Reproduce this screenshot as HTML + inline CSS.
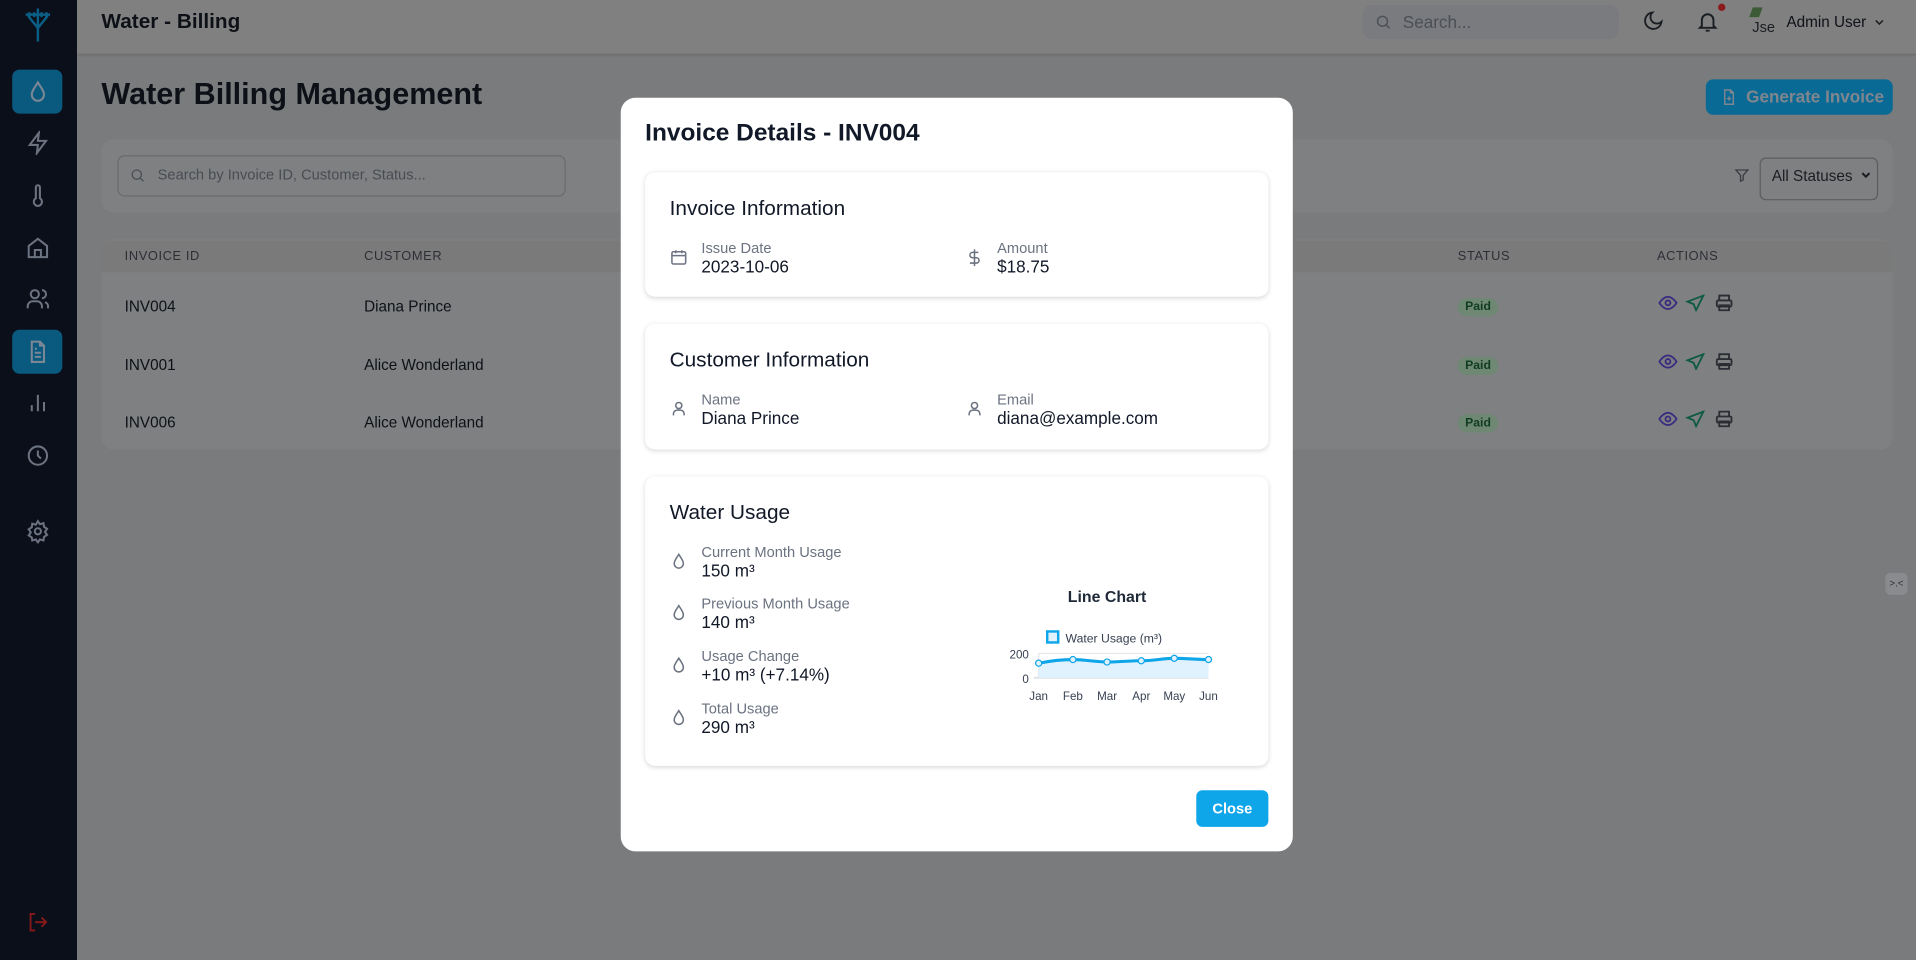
<!DOCTYPE html>
<html><head><meta charset="utf-8"><style>
html,body{margin:0;padding:0;width:1916px;height:960px;overflow:hidden;background:#7a7b7d}
#s{position:absolute;left:0;top:0;width:1568px;height:786px;transform:scale(1.22194,1.2214);transform-origin:0 0;font-family:"Liberation Sans",sans-serif;color:#0d1117}
.a{position:absolute}
svg{display:block}
.si{position:absolute;left:10px;width:41px;height:36px;display:flex;align-items:center;justify-content:center}
.card{position:absolute;background:#7f8081;border-radius:10px}
.th{font-size:10.5px;color:#2c2f35;letter-spacing:.5px}
.td{font-size:12.5px;color:#0d1117}
.paid{position:absolute;background:#6e8873;color:#103c20;font-size:10px;font-weight:bold;padding:2px 6px;border-radius:8px}
.mc{position:absolute;left:20px;width:510px;background:#fff;border-radius:8px;box-shadow:0 1px 4px rgba(0,0,0,.15)}
.ct{position:absolute;left:20px;font-size:17px;color:#111827}
.lb{position:absolute;font-size:12px;color:#6b7280}
.vl{position:absolute;font-size:14px;color:#111827}
</style></head><body><div id="s">
<div class="a" style="left:0;top:0;width:63px;height:786px;background:#0a0f1a"></div>
<svg class="a" style="left:19px;top:4px" width="24" height="30" viewBox="0 0 24 30" fill="none" stroke="#0b5f86" stroke-width="2"><path d="M2 8h20M12 3v29M5 6v4M9 6v4M15 6v4M19 6v4M4 9l8 10 8-10"/></svg>
<div class="si" style="top:57px;background:#0a5a80;border-radius:6px"><svg width="20" height="20" viewBox="0 0 24 24" fill="none" stroke="#7c8795" stroke-width="2"><path d="M12 3C9 8 6 11 6 15a6 6 0 0012 0c0-4-3-7-6-12z"/></svg></div>
<div class="si" style="top:99px"><svg width="20" height="20" viewBox="0 0 24 24" fill="none" stroke="#6b7280" stroke-width="2"><path d="M13 2L4 14h8l-1 8 9-12h-8z"/></svg></div>
<div class="si" style="top:142px"><svg width="20" height="22" viewBox="0 0 24 24" fill="none" stroke="#6b7280" stroke-width="2"><path d="M14 14.8V4a2 2 0 00-4 0v10.8a4 4 0 104 0z"/></svg></div>
<div class="si" style="top:185px"><svg width="20" height="20" viewBox="0 0 24 24" fill="none" stroke="#6b7280" stroke-width="2"><path d="M3 10l9-7 9 7v11H3zM9 21v-7h6v7"/></svg></div>
<div class="si" style="top:227px"><svg width="20" height="20" viewBox="0 0 24 24" fill="none" stroke="#6b7280" stroke-width="2"><circle cx="9" cy="7" r="4"/><path d="M2 21v-2a5 5 0 015-5h4a5 5 0 015 5v2M16 3a4 4 0 010 8M22 21v-2a4 4 0 00-3-4"/></svg></div>
<div class="si" style="top:270px;background:#0a5a80;border-radius:6px"><svg width="20" height="20" viewBox="0 0 24 24" fill="none" stroke="#7c8795" stroke-width="2"><path d="M14 2H6v20h12V6zM14 2v4h4M9 13h6M9 17h6M9 9h2"/></svg></div>
<div class="si" style="top:312px"><svg width="20" height="20" viewBox="0 0 24 24" fill="none" stroke="#6b7280" stroke-width="2"><path d="M6 20v-6M12 20V4M18 20v-9"/></svg></div>
<div class="si" style="top:355px"><svg width="20" height="20" viewBox="0 0 24 24" fill="none" stroke="#6b7280" stroke-width="2"><circle cx="12" cy="12" r="9"/><path d="M12 7v5l3 3"/></svg></div>
<div class="si" style="top:417px"><svg width="20" height="20" viewBox="0 0 24 24" fill="none" stroke="#6b7280" stroke-width="2"><circle cx="12" cy="12" r="3"/><path d="M12 2l2 3 3.5-1 .5 3.5 3 2-2 3 2 3-3 2-.5 3.5-3.5-1-2 3-2-3-3.5 1L6 18l-3-2 2-3-2-3 3-2 .5-3.5 3.5 1z"/></svg></div>
<div class="si" style="top:737px"><svg width="18" height="18" viewBox="0 0 24 24" fill="none" stroke="#8a1a1a" stroke-width="2"><path d="M9 21H4V3h5M16 17l5-5-5-5M21 12H9"/></svg></div>
<div class="a" style="left:63px;top:0;width:1505px;height:44px;background:#808080;box-shadow:0 1px 2px rgba(0,0,0,.15)"></div>
<div class="a" style="left:83px;top:8px;font-size:17px;font-weight:bold;color:#0d1117">Water - Billing</div>
<div class="a" style="left:1115px;top:4px;width:210px;height:28px;background:#7a7b7e;border-radius:8px"></div>
<svg class="a" style="left:1125px;top:11px" width="14" height="14" viewBox="0 0 24 24" fill="none" stroke="#4b4f56" stroke-width="2"><circle cx="11" cy="11" r="7"/><path d="M21 21l-5-5"/></svg>
<div class="a" style="left:1148px;top:10px;font-size:14px;color:#4b4f56">Search...</div>
<svg class="a" style="left:1344px;top:8px" width="18" height="18" viewBox="0 0 24 24" fill="none" stroke="#1a1d22" stroke-width="2"><path d="M21 13A9 9 0 1111 3a7 7 0 0010 10z"/></svg>
<svg class="a" style="left:1388px;top:8px" width="19" height="20" viewBox="0 0 24 24" fill="none" stroke="#1a1d22" stroke-width="2"><path d="M6 16V10a6 6 0 0112 0v6l2 2H4zM10 21h4"/></svg>
<div class="a" style="left:1406px;top:3px;width:6px;height:6px;border-radius:50%;background:#8b1a1a"></div>
<div class="a" style="left:1434px;top:15px;font-size:12px;color:#1a1d22">Jse</div>
<div class="a" style="left:1433px;top:6px;width:8px;height:8px;background:#3c5a36;transform:skewX(-20deg)"></div>
<div class="a" style="left:1462px;top:11px;font-size:12.5px;color:#0d1117">Admin User</div>
<svg class="a" style="left:1533px;top:13px" width="10" height="10" viewBox="0 0 24 24" fill="none" stroke="#1a1d22" stroke-width="3"><path d="M5 9l7 7 7-7"/></svg>
<div class="a" style="left:83px;top:63px;font-size:25px;font-weight:bold;color:#0d1117">Water Billing Management</div>
<div class="a" style="left:1396px;top:65px;width:153px;height:29px;background:#0a6a96;border-radius:6px"></div>
<svg class="a" style="left:1408px;top:72px" width="14" height="15" viewBox="0 0 24 24" fill="none" stroke="#80868e" stroke-width="2"><path d="M14 2H6v20h12V6zM14 2v4h4M12 11v6M9 14h6"/></svg>
<div class="a" style="left:1429px;top:71px;font-size:14px;font-weight:bold;color:#80868e">Generate Invoice</div>
<div class="card" style="left:83px;top:114px;width:1466px;height:60px"></div>
<div class="a" style="left:96px;top:127px;width:365px;height:32px;border:1px solid #6a6b6d;border-radius:6px"></div>
<svg class="a" style="left:106px;top:137px" width="13" height="13" viewBox="0 0 24 24" fill="none" stroke="#4b4f56" stroke-width="2"><circle cx="11" cy="11" r="7"/><path d="M21 21l-5-5"/></svg>
<div class="a" style="left:129px;top:136px;font-size:12px;color:#484c53">Search by Invoice ID, Customer, Status...</div>
<svg class="a" style="left:1419px;top:137px" width="13" height="13" viewBox="0 0 24 24" fill="none" stroke="#3a3d42" stroke-width="2"><path d="M3 4h18l-7 8v7l-4 2v-9z"/></svg>
<div class="a" style="left:1440px;top:129px;width:95px;height:33px;border:1px solid #5c5d60;border-radius:5px"></div>
<div class="a" style="left:1450px;top:137px;font-size:12.5px;color:#1a1d22">All Statuses</div>
<svg class="a" style="left:1522px;top:138px" width="10" height="10" viewBox="0 0 24 24" fill="none" stroke="#1a1d22" stroke-width="4"><path d="M5 9l7 7 7-7"/></svg>
<div class="card" style="left:83px;top:196px;width:1466px;height:172px;overflow:hidden"><div style="height:26px;background:#7a7a7b;margin-top:1px"></div></div>
<div class="a th" style="left:102px;top:204px">INVOICE ID</div>
<div class="a th" style="left:298px;top:204px">CUSTOMER</div>
<div class="a th" style="left:1193px;top:204px">STATUS</div>
<div class="a th" style="left:1356px;top:204px">ACTIONS</div>
<div class="a td" style="left:102px;top:244px">INV004</div><div class="a td" style="left:298px;top:244px">Diana Prince</div>
<div class="a td" style="left:102px;top:292px">INV001</div><div class="a td" style="left:298px;top:292px">Alice Wonderland</div>
<div class="a td" style="left:102px;top:339px">INV006</div><div class="a td" style="left:298px;top:339px">Alice Wonderland</div>
<div class="paid" style="left:1193px;top:244px">Paid</div>
<div class="paid" style="left:1193px;top:292px">Paid</div>
<div class="paid" style="left:1193px;top:339px">Paid</div>
<svg class="a" style="left:1357px;top:241px" width="65" height="14" viewBox="0 0 65 14" fill="none" stroke-width="1.5"><g stroke="#3a2b80"><path d="M1 7s3-5 7-5 7 5 7 5-3 5-7 5-7-5-7-5z"/><circle cx="8" cy="7" r="2"/></g><path stroke="#0e5a44" d="M37 1L24 6l5 2 2 5z"/><g stroke="#2a2d33"><rect x="48" y="5" width="12" height="5" rx="1"/><path d="M50 5V1h8v4M50 9h8v4h-8z"/></g></svg>
<svg class="a" style="left:1357px;top:289px" width="65" height="14" viewBox="0 0 65 14" fill="none" stroke-width="1.5"><g stroke="#3a2b80"><path d="M1 7s3-5 7-5 7 5 7 5-3 5-7 5-7-5-7-5z"/><circle cx="8" cy="7" r="2"/></g><path stroke="#0e5a44" d="M37 1L24 6l5 2 2 5z"/><g stroke="#2a2d33"><rect x="48" y="5" width="12" height="5" rx="1"/><path d="M50 5V1h8v4M50 9h8v4h-8z"/></g></svg>
<svg class="a" style="left:1357px;top:336px" width="65" height="14" viewBox="0 0 65 14" fill="none" stroke-width="1.5"><g stroke="#3a2b80"><path d="M1 7s3-5 7-5 7 5 7 5-3 5-7 5-7-5-7-5z"/><circle cx="8" cy="7" r="2"/></g><path stroke="#0e5a44" d="M37 1L24 6l5 2 2 5z"/><g stroke="#2a2d33"><rect x="48" y="5" width="12" height="5" rx="1"/><path d="M50 5V1h8v4M50 9h8v4h-8z"/></g></svg>
<div class="a" style="left:1543px;top:469px;width:18px;height:18px;background:#8a8b8f;border-radius:4px;font-size:8px;color:#333;text-align:center;line-height:17px">&gt;.&lt;</div>
<div class="a" style="left:508px;top:80px;width:550px;height:617px;background:#fff;border-radius:12px">
 <div class="a" style="left:20px;top:18px;font-size:20px;font-weight:bold;color:#111827">Invoice Details - INV004</div>
 <div class="mc" style="top:61px;height:102px">
  <div class="ct" style="top:20px">Invoice Information</div>
  <svg class="a" style="left:20px;top:61px" width="15" height="17" viewBox="0 0 24 24" fill="none" stroke="#6b7280" stroke-width="2"><rect x="3" y="5" width="18" height="16" rx="2"/><path d="M3 10h18M8 3v4M16 3v4"/></svg>
  <div class="lb" style="left:46px;top:55px">Issue Date</div><div class="vl" style="left:46px;top:69px">2023-10-06</div>
  <svg class="a" style="left:262px;top:61px" width="15" height="18" viewBox="0 0 24 24" fill="none" stroke="#6b7280" stroke-width="2"><path d="M12 1v22M17 5H9.5a3.5 3.5 0 000 7h5a3.5 3.5 0 010 7H6"/></svg>
  <div class="lb" style="left:288px;top:55px">Amount</div><div class="vl" style="left:288px;top:69px">$18.75</div>
 </div>
 <div class="mc" style="top:185px;height:103px">
  <div class="ct" style="top:20px">Customer Information</div>
  <svg class="a" style="left:20px;top:61px" width="15" height="17" viewBox="0 0 24 24" fill="none" stroke="#6b7280" stroke-width="2"><circle cx="12" cy="8" r="4"/><path d="M5 21v-2a5 5 0 015-5h4a5 5 0 015 5v2"/></svg>
  <div class="lb" style="left:46px;top:55px">Name</div><div class="vl" style="left:46px;top:69px">Diana Prince</div>
  <svg class="a" style="left:262px;top:61px" width="15" height="17" viewBox="0 0 24 24" fill="none" stroke="#6b7280" stroke-width="2"><circle cx="12" cy="8" r="4"/><path d="M5 21v-2a5 5 0 015-5h4a5 5 0 015 5v2"/></svg>
  <div class="lb" style="left:288px;top:55px">Email</div><div class="vl" style="left:288px;top:69px">diana@example.com</div>
 </div>
 <div class="mc" style="top:310px;height:237px">
  <div class="ct" style="top:20px">Water Usage</div>
  <svg class="a" style="left:20px;top:61px" width="15" height="17" viewBox="0 0 24 24" fill="none" stroke="#6b7280" stroke-width="2"><path d="M12 3C9 8 6 11 6 15a6 6 0 0012 0c0-4-3-7-6-12z"/></svg>
  <div class="lb" style="left:46px;top:55px">Current Month Usage</div><div class="vl" style="left:46px;top:69px">150 m³</div>
  <svg class="a" style="left:20px;top:103px" width="15" height="17" viewBox="0 0 24 24" fill="none" stroke="#6b7280" stroke-width="2"><path d="M12 3C9 8 6 11 6 15a6 6 0 0012 0c0-4-3-7-6-12z"/></svg>
  <div class="lb" style="left:46px;top:97px">Previous Month Usage</div><div class="vl" style="left:46px;top:111px">140 m³</div>
  <svg class="a" style="left:20px;top:146px" width="15" height="17" viewBox="0 0 24 24" fill="none" stroke="#6b7280" stroke-width="2"><path d="M12 3C9 8 6 11 6 15a6 6 0 0012 0c0-4-3-7-6-12z"/></svg>
  <div class="lb" style="left:46px;top:140px">Usage Change</div><div class="vl" style="left:46px;top:154px">+10 m³ (+7.14%)</div>
  <svg class="a" style="left:20px;top:189px" width="15" height="17" viewBox="0 0 24 24" fill="none" stroke="#6b7280" stroke-width="2"><path d="M12 3C9 8 6 11 6 15a6 6 0 0012 0c0-4-3-7-6-12z"/></svg>
  <div class="lb" style="left:46px;top:183px">Total Usage</div><div class="vl" style="left:46px;top:197px">290 m³</div>
  <svg class="a" style="left:270px;top:90px" width="220" height="110" viewBox="270 85 220 110" font-family="Liberation Sans, sans-serif">
   <text x="378" y="98" text-anchor="middle" font-size="13" font-weight="bold" fill="#1f2937">Line Chart</text>
   <rect x="329" y="122" width="9" height="9" fill="#e0f2fe" stroke="#0ea5e9" stroke-width="2"/>
   <text x="344" y="131" font-size="10" fill="#374151">Water Usage (m³)</text>
   <line x1="322" y1="140" x2="461" y2="140" stroke="#e5e7eb"/>
   <line x1="322" y1="140" x2="322" y2="160" stroke="#e5e7eb"/>
   <line x1="318" y1="160" x2="461" y2="160" stroke="#d1d5db"/>
   <text x="314" y="144" text-anchor="end" font-size="9.5" fill="#374151">200</text>
   <text x="314" y="164" text-anchor="end" font-size="9.5" fill="#374151">0</text>
   <path d="M322 148C332 146 340 145 350 145S368 147 378 147S396 146 406 146S424 144 433 144S452 145 461 145V160H322Z" fill="#e0f2fe"/>
   <path d="M322 148C332 146 340 145 350 145S368 147 378 147S396 146 406 146S424 144 433 144S452 145 461 145" fill="none" stroke="#0ea5e9" stroke-width="2.5"/>
   <g fill="#e0f2fe" stroke="#0ea5e9" stroke-width="1"><circle cx="322" cy="148" r="2.5"/><circle cx="350" cy="145" r="2.5"/><circle cx="378" cy="147" r="2.5"/><circle cx="406" cy="146" r="2.5"/><circle cx="433" cy="144" r="2.5"/><circle cx="461" cy="145" r="2.5"/></g>
   <g font-size="9.5" fill="#374151" text-anchor="middle"><text x="322" y="178">Jan</text><text x="350" y="178">Feb</text><text x="378" y="178">Mar</text><text x="406" y="178">Apr</text><text x="433" y="178">May</text><text x="461" y="178">Jun</text></g>
  </svg>
 </div>
 <div class="a" style="left:471px;top:567px;width:59px;height:30px;background:#0ea5e9;border-radius:5px;color:#fff;font-size:12px;font-weight:bold;text-align:center;line-height:30px">Close</div>
</div>
</div></body></html>
